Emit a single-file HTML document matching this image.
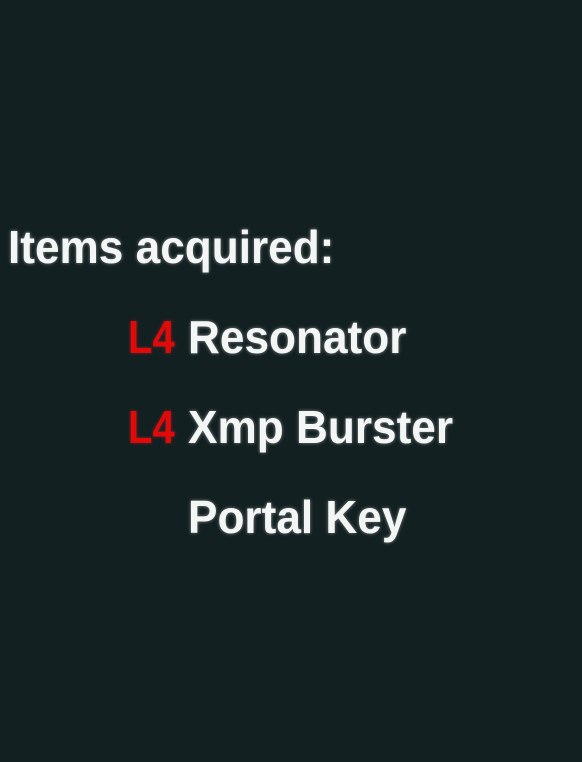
<!DOCTYPE html>
<html><head><style>
html,body{margin:0;padding:0;width:582px;height:762px;background:#132022;overflow:hidden}
.t{position:absolute;font-family:"Liberation Sans",sans-serif;font-weight:bold;font-size:46px;color:#f4f6f6;white-space:nowrap;line-height:1;text-shadow:0 0 4px rgba(255,255,255,.45);transform:scaleX(0.96);transform-origin:left top}
.r{color:#e00a0a;text-shadow:0 0 4px rgba(255,40,40,.4)}
.l{transform:scaleX(0.87)}
</style></head><body>
<div class="t" style="left:8px;top:224px">Items acquired:</div>
<div class="t l" style="left:128px;top:314px"><span class="r">L4</span></div>
<div class="t" style="left:188px;top:314px">Resonator</div>
<div class="t l" style="left:128px;top:404px"><span class="r">L4</span></div>
<div class="t" style="left:188px;top:404px">Xmp Burster</div>
<div class="t" style="left:188px;top:494px">Portal Key</div>
</body></html>
